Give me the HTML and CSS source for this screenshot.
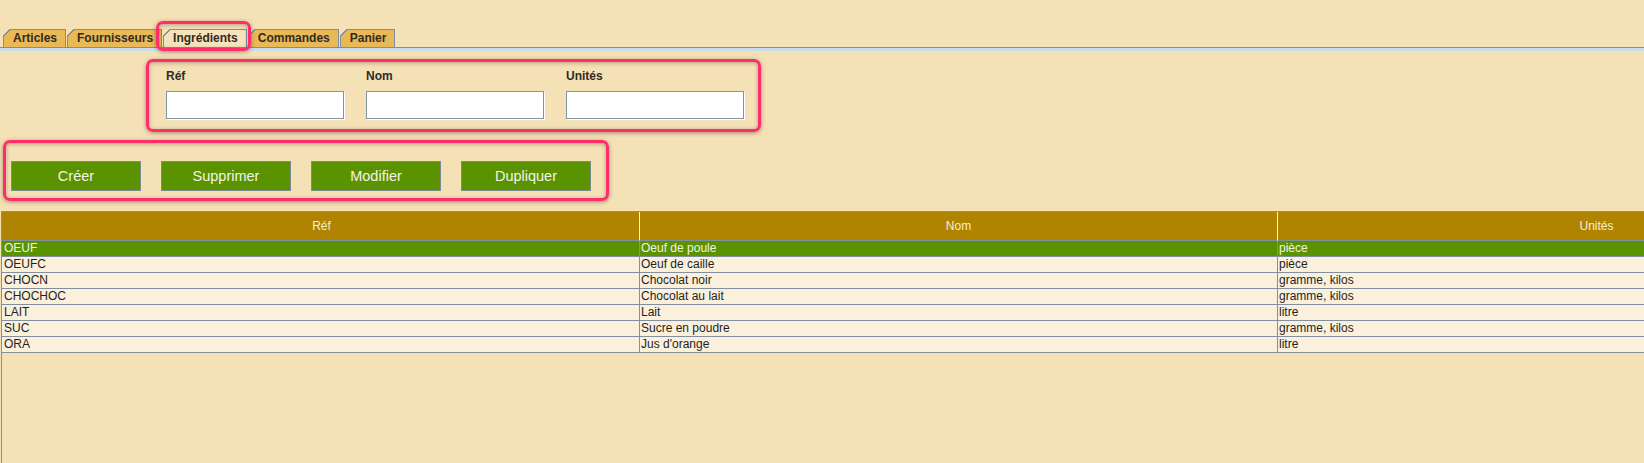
FILE: index.html
```html
<!DOCTYPE html>
<html lang="fr">
<head>
<meta charset="utf-8">
<title>Ingrédients</title>
<link rel="stylesheet" href="styles.css">
</head>
<body>
<div class="app">
  <div class="tabbar">
    <div class="tab">Articles</div>
    <div class="tab">Fournisseurs</div>
    <div class="tab active">Ingrédients</div>
    <div class="tab">Commandes</div>
    <div class="tab">Panier</div>
  </div>
  <div class="panel">
    <div class="form">
      <label class="field"><span class="label">Réf</span><input class="input" type="text"></label>
      <label class="field"><span class="label">Nom</span><input class="input" type="text"></label>
      <label class="field"><span class="label">Unités</span><input class="input" type="text"></label>
    </div>
    <div class="actions">
      <button class="btn">Créer</button>
      <button class="btn">Supprimer</button>
      <button class="btn">Modifier</button>
      <button class="btn">Dupliquer</button>
    </div>
    <div class="grid">
      <table class="table">
        <colgroup><col class="c1"><col class="c2"><col class="c3"></colgroup>
        <thead>
          <tr><th>Réf</th><th>Nom</th><th>Unités</th></tr>
        </thead>
        <tbody>
          <tr class="selected"><td>OEUF</td><td>Oeuf de poule</td><td>pièce</td></tr>
          <tr><td>OEUFC</td><td>Oeuf de caille</td><td>pièce</td></tr>
          <tr><td>CHOCN</td><td>Chocolat noir</td><td>gramme, kilos</td></tr>
          <tr><td>CHOCHOC</td><td>Chocolat au lait</td><td>gramme, kilos</td></tr>
          <tr><td>LAIT</td><td>Lait</td><td>litre</td></tr>
          <tr><td>SUC</td><td>Sucre en poudre</td><td>gramme, kilos</td></tr>
          <tr><td>ORA</td><td>Jus d'orange</td><td>litre</td></tr>
        </tbody>
      </table>
    </div>
  </div>
  <div class="mark mark-tab"></div>
  <div class="mark mark-form"></div>
  <div class="mark mark-actions"></div>
</div>
</body>
</html>
```
FILE: styles.css
```css
* { box-sizing: border-box; }

html, body {
  margin: 0;
  padding: 0;
}

body {
  width: 1644px;
  height: 463px;
  overflow: hidden;
  background: #f5e1b6;
  font-family: "Liberation Sans", Arial, sans-serif;
  color: #2a2420;
}

.app {
  position: relative;
  width: 1644px;
  height: 463px;
}

/* ---------- tabs ---------- */
.tabbar {
  display: flex;
  align-items: flex-end;
  padding: 29px 0 0 3px;
  height: 48px;
  border-bottom: 1px solid #7b8ea3;
}

.tab {
  position: relative;
  height: 18px;
  padding: 0 8px 0 9px;
  margin-right: 1px;
  border: 1px solid #7b8ea3;
  border-bottom: none;
  background: #e8b954;
  font-size: 12px;
  font-weight: bold;
  line-height: 17px;
  color: #35291f;
  white-space: nowrap;
}

.tab::before {
  content: "";
  position: absolute;
  left: -1px;
  top: -1px;
  width: 7px;
  height: 7px;
  background: linear-gradient(135deg, #f5e1b6 0 46%, #7b8ea3 46% 62%, transparent 62%);
}

.tab.active {
  background: #f5e3bb;
}

/* ---------- panel ---------- */
.panel {
  border-top: 3px solid #cfdceb;
}

.form {
  display: flex;
  gap: 22px;
  padding: 18px 0 0 166px;
}

.field {
  display: flex;
  flex-direction: column;
  gap: 8px;
  width: 178px;
}

.label {
  font-size: 12px;
  font-weight: bold;
  line-height: 14px;
  color: #2f2b28;
}

.input {
  width: 178px;
  height: 28px;
  margin: 0;
  border: 1px solid #8193a4;
  box-shadow: 1px 1px 0 #ffffff;
  background: #ffffff;
  font: 12px "Liberation Sans", Arial, sans-serif;
  outline: none;
}

.actions {
  display: flex;
  gap: 20px;
  padding: 42px 0 0 11px;
}

.btn {
  width: 130px;
  height: 30px;
  margin: 0;
  padding: 0;
  border: 1px solid #7d8c8c;
  background: #5b9200;
  color: #f4f4e6;
  font: 14.5px "Liberation Sans", Arial, sans-serif;
  cursor: pointer;
}

/* ---------- table ---------- */
.grid {
  margin: 20px 0 0 1px;
  height: 252px;
  border-top: 1px solid #8090a0;
  border-left: 1px solid #8090a0;
  overflow: hidden;
}

.table {
  width: 1913px;
  table-layout: fixed;
  border-collapse: separate;
  border-spacing: 0;
  font-size: 12px;
}

.c1 { width: 637px; }
.c2 { width: 638px; }
.c3 { width: 638px; }

.table th {
  height: 29px;
  padding: 0;
  background: #b08400;
  color: #f6eed4;
  font-weight: normal;
  line-height: 28px;
  text-align: center;
  border-bottom: 1px solid #8090a0;
  border-left: 1px solid #f8f2e4;
}

.table td {
  padding: 0 0 0 1px;
  line-height: 15px;
  background: #faf0dc;
  color: #241f1c;
  border-bottom: 1px solid #8090a0;
  border-left: 1px solid #8090a0;
  white-space: nowrap;
}

.table th:first-child,
.table td:first-child {
  border-left: none;
  padding-left: 2px;
}

.table tr.selected td {
  background: #5b9300;
  color: #f2f2e2;
}

/* ---------- annotation marks ---------- */
.mark {
  position: absolute;
  border: 3px solid #ff2d69;
  border-radius: 7px;
  box-shadow: 0 1px 4px rgba(60, 30, 20, 0.45), inset 0 1px 4px rgba(60, 30, 20, 0.35);
  pointer-events: none;
}

.mark-tab {
  left: 156px;
  top: 21px;
  width: 95px;
  height: 30px;
}

.mark-form {
  left: 146px;
  top: 59px;
  width: 615px;
  height: 73px;
}

.mark-actions {
  left: 3px;
  top: 140px;
  width: 606px;
  height: 61px;
}
```
